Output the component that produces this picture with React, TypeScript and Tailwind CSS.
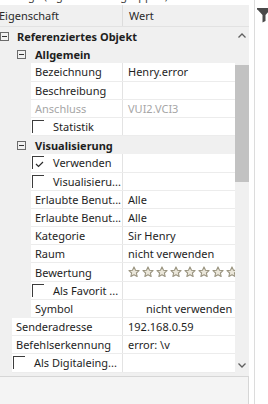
import React from "react";

type Row =
  | { kind: "cat"; level: 0 | 1; label: string }
  | { kind: "prop"; indent: number; label: string; value?: string; gray?: boolean; stars?: boolean; valuePad?: boolean }
  | { kind: "check"; indent: number; label: string; checked?: boolean };

const rows: Row[] = [
  { kind: "cat", level: 0, label: "Referenziertes Objekt" },
  { kind: "cat", level: 1, label: "Allgemein" },
  { kind: "prop", indent: 31, label: "Bezeichnung", value: "Henry.error" },
  { kind: "prop", indent: 31, label: "Beschreibung", value: "" },
  { kind: "prop", indent: 31, label: "Anschluss", value: "VUI2.VCI3", gray: true },
  { kind: "check", indent: 31, label: "Statistik" },
  { kind: "cat", level: 1, label: "Visualisierung" },
  { kind: "check", indent: 31, label: "Verwenden", checked: true },
  { kind: "check", indent: 31, label: "Visualisieru..." },
  { kind: "prop", indent: 31, label: "Erlaubte Benut...", value: "Alle" },
  { kind: "prop", indent: 31, label: "Erlaubte Benut...", value: "Alle" },
  { kind: "prop", indent: 31, label: "Kategorie", value: "Sir Henry" },
  { kind: "prop", indent: 31, label: "Raum", value: "nicht verwenden" },
  { kind: "prop", indent: 31, label: "Bewertung", stars: true },
  { kind: "check", indent: 31, label: "Als Favorit ..." },
  { kind: "prop", indent: 31, label: "Symbol", value: "nicht verwenden", valuePad: true },
  { kind: "prop", indent: 12, label: "Senderadresse", value: "192.168.0.59" },
  { kind: "prop", indent: 12, label: "Befehlserkennung", value: "error: \\v" },
  { kind: "check", indent: 12, label: "Als Digitaleing..." },
];

function Expander() {
  return (
    <svg width="9" height="9" viewBox="0 0 9 9" className="shrink-0">
      <rect x="0.5" y="0.5" width="8" height="8" fill="none" stroke="#6b6b6b" />
      <line x1="2" y1="4.5" x2="7" y2="4.5" stroke="#333" />
    </svg>
  );
}

function Star() {
  return (
    <svg width="12" height="12" viewBox="0 0 24 24" className="shrink-0">
      <path
        d="M12 1.8l3 6.6 7.1.8-5.3 4.8 1.5 7L12 17.4l-6.3 3.6 1.5-7-5.3-4.8 7.1-.8z"
        fill="#ebe7da"
        stroke="#9a9480"
        strokeWidth="2.2"
        strokeLinejoin="round"
      />
    </svg>
  );
}

function CheckBox({ checked }: { checked?: boolean }) {
  return (
    <div className="relative w-[12px] h-[13px] shrink-0 border-l border-t border-[#3c3c3c] bg-white">
      {checked && (
        <svg width="10" height="10" viewBox="0 0 10 10" className="absolute left-[2px] top-[3px]">
          <polyline points="1,4 3.5,6.5 8,2" fill="none" stroke="#2a2a2a" strokeWidth="1.2" />
        </svg>
      )}
    </div>
  );
}

function GridRow({ row }: { row: Row }) {
  if (row.kind === "cat") {
    return (
      <div className="h-[18.2px] flex items-center bg-[#f0f0f0]">
        <div className={row.level === 0 ? "pl-[0px] flex items-center" : "pl-[17px] flex items-center"}>
          <Expander />
        </div>
        <span className={row.level === 0 ? "ml-[8px] font-bold text-[#1e1e1e] whitespace-nowrap" : "ml-[9px] font-bold text-[#1e1e1e] whitespace-nowrap"}>
          {row.label}
        </span>
      </div>
    );
  }
  return (
    <div className="h-[18.2px] flex bg-[#f0f0f0]">
      <div style={{ width: row.indent }} className="shrink-0" />
      <div className="flex-1 flex bg-white border-b border-[#ececec] min-w-0">
        <div className="shrink-0 flex items-center border-r border-[#e3e3e3] overflow-hidden" style={{ width: 123 - row.indent }}>
          {row.kind === "check" ? (
            <>
              <div className="ml-[1px]">
                <CheckBox checked={row.checked} />
              </div>
              <span className="ml-[9px] whitespace-nowrap text-[#1e1e1e]">{row.label}</span>
            </>
          ) : (
            <span className={row.gray ? "pl-[4px] whitespace-nowrap text-[#a6a6a6]" : "pl-[4px] whitespace-nowrap text-[#1e1e1e]"}>
              {row.label}
            </span>
          )}
        </div>
        <div className="flex-1 flex items-center overflow-hidden min-w-0">
          {row.kind === "prop" && row.stars ? (
            <div className="flex pl-[5px] gap-[2px]">
              {Array.from({ length: 9 }).map((_, i) => (
                <Star key={i} />
              ))}
            </div>
          ) : row.kind === "prop" ? (
            <span
              className={
                row.gray
                  ? "pl-[5px] whitespace-nowrap text-[#a6a6a6]"
                  : row.valuePad
                  ? "pl-[23px] whitespace-nowrap text-[#1e1e1e]"
                  : "pl-[5px] whitespace-nowrap text-[#1e1e1e]"
              }
            >
              {row.value}
            </span>
          ) : null}
        </div>
      </div>
    </div>
  );
}

export default function App() {
  return (
    <div
      className="w-[268px] h-[404px] overflow-hidden flex bg-white text-[11px] leading-none"
      style={{ fontFamily: '"Noto Sans", sans-serif' }}
    >
      <div className="w-[249px] shrink-0 flex flex-col bg-[#f0f0f0]">
        <div className="h-[5px] overflow-hidden bg-white">
          <div className="mt-[-10px] pl-[0px] whitespace-nowrap text-[#444]">Anzeige (Eigenschaftengruppen)</div>
        </div>
        <div className="h-[22px] flex items-center bg-[#f0f0f0] border-b border-[#e2e2e2] text-[#2a2a2a]">
          <div className="w-[123px] h-full flex items-center border-r border-[#dcdcdc]">
            <span className="-ml-[1px]">Eigenschaft</span>
          </div>
          <div className="pl-[6px]">Wert</div>
        </div>
        <div className="flex h-[346px]">
          <div className="w-[235px] flex flex-col overflow-hidden">
            {rows.map((r, i) => (
              <GridRow key={i} row={r} />
            ))}
          </div>
          <div className="w-[14px] flex flex-col items-center bg-[#f0f0f0]">
            <div className="h-[16px] flex items-center justify-center">
              <svg width="8" height="5" viewBox="0 0 8 5">
                <polyline points="0.5,4.5 4,1 7.5,4.5" fill="none" stroke="#606060" strokeWidth="1.3" />
              </svg>
            </div>
            <div className="mt-[22px] w-[14px] h-[117px] bg-[#c2c2c2]" />
            <div className="flex-1" />
            <div className="h-[16px] flex items-center justify-center">
              <svg width="8" height="5" viewBox="0 0 8 5">
                <polyline points="0.5,0.5 4,4 7.5,0.5" fill="none" stroke="#606060" strokeWidth="1.3" />
              </svg>
            </div>
          </div>
        </div>
        <div className="h-[3px] bg-[#f0f0f0]" />
        <div className="flex-1 bg-[#f4f4f4] border-t border-r border-[#d6d6d6]" />
      </div>
      <div className="w-[5px] shrink-0 bg-white" />
      <div className="flex-1 border-l border-[#dcdcdc] bg-white pt-[8px] pl-[2px]">
        <svg width="14" height="15" viewBox="0 0 14 15">
          <path d="M0 1h14L8.5 7v6l-3 1.5V7z" fill="#4a4a4a" />
          <rect x="0" y="0" width="14" height="1.5" fill="#4a4a4a" />
        </svg>
      </div>
    </div>
  );
}
